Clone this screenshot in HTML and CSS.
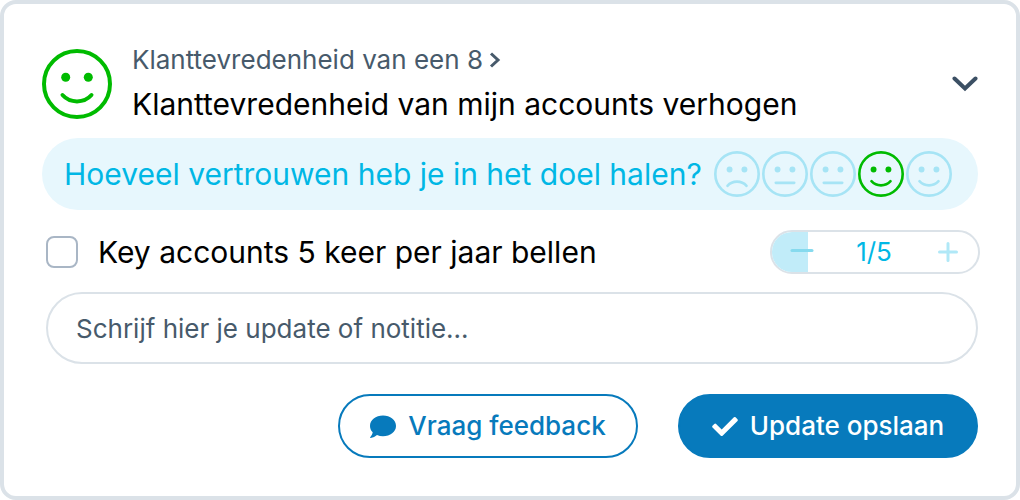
FILE: index.html
```html
<!DOCTYPE html>
<html lang="nl">
<head>
<meta charset="utf-8">
<meta name="viewport" content="width=device-width, initial-scale=1">
<title>Update</title>
<link rel="stylesheet" href="styles.css">
</head>
<body>
<svg class="sprite" aria-hidden="true">
  <symbol id="happy" viewBox="0 0 70 70">
    <circle cx="35" cy="35" r="33" class="line"/>
    <circle cx="23.7" cy="28.2" r="4.5" class="dot"/><circle cx="46.3" cy="28.2" r="4.5" class="dot"/>
    <path d="M20.5 46C28 54.5 42 54.5 49.5 46" class="line"/>
  </symbol>
  <symbol id="neutral" viewBox="0 0 70 70">
    <circle cx="35" cy="35" r="33" class="line"/>
    <circle cx="23.7" cy="28.2" r="4.5" class="dot"/><circle cx="46.3" cy="28.2" r="4.5" class="dot"/>
    <path d="M21 48.5H49" class="line"/>
  </symbol>
  <symbol id="sad" viewBox="0 0 70 70">
    <circle cx="35" cy="35" r="33" class="line"/>
    <circle cx="23.7" cy="28.2" r="4.5" class="dot"/><circle cx="46.3" cy="28.2" r="4.5" class="dot"/>
    <path d="M20.5 53C28 44.5 42 44.5 49.5 53" class="line"/>
  </symbol>
</svg>
<main class="card">
  <header class="header">
    <svg class="face face-large"><use href="#happy"/></svg>
    <div class="heading">
      <a class="parent" href="#">Klanttevredenheid van een 8<svg class="parent-arrow" viewBox="0 0 12 18"><path d="M2 2.5L9 9L2 15.5"/></svg></a>
      <h1 class="title">Klanttevredenheid van mijn accounts verhogen</h1>
    </div>
    <button class="toggle" type="button" aria-label="Inklappen"><svg class="toggle-icon" viewBox="0 0 26 16"><path d="M2.5 2.5L13 12.5L23.5 2.5"/></svg></button>
  </header>
  <section class="trust">
    <p class="question">Hoeveel vertrouwen heb je in het doel halen?</p>
    <div class="rating">
      <button class="rate" type="button" aria-label="Zeer weinig"><svg class="face"><use href="#sad"/></svg></button>
      <button class="rate" type="button" aria-label="Weinig"><svg class="face"><use href="#neutral"/></svg></button>
      <button class="rate" type="button" aria-label="Neutraal"><svg class="face"><use href="#neutral"/></svg></button>
      <button class="rate selected" type="button" aria-label="Veel" aria-pressed="true"><svg class="face"><use href="#happy"/></svg></button>
      <button class="rate" type="button" aria-label="Zeer veel"><svg class="face"><use href="#happy"/></svg></button>
    </div>
  </section>
  <div class="form">
    <div class="task">
      <label class="task-label"><input class="check" type="checkbox">Key accounts 5 keer per jaar bellen</label>
      <div class="stepper">
        <button class="step minus" type="button" aria-label="Minder"><svg class="step-icon" viewBox="0 0 20 20"><path d="M0 8.5H20"/></svg></button>
        <output class="count">1/5</output>
        <button class="step plus" type="button" aria-label="Meer"><svg class="step-icon" viewBox="0 0 20 20"><path d="M1.5 10H18.5M10 1.5V18.5"/></svg></button>
      </div>
    </div>
    <input class="note" type="text" aria-label="Update of notitie" placeholder="Schrijf hier je update of notitie...">
    <div class="actions">
      <button class="button" type="button"><svg class="button-icon" viewBox="0 0 26 26"><path d="M13 2.5C20.2 2.5 26 7.100 26 13S20.200 23.300 13 23.300C10.800 23.300 8.800 22.900 7 22.100C5.200 23.700 3 24.900 0.700 24.900C0.100 24.900 0 24.300 0.400 23.900C1.700 22.500 2.400 21 2.700 19.300C1 17.600 0 15.400 0 13C0 7.100 5.800 2.500 13 2.500Z"/></svg>Vraag feedback</button>
      <button class="button primary" type="button"><svg class="button-icon" viewBox="0 0 26 26"><path d="M8.800 22.700L0.500 14.400Q-0.200 13.500 0.500 12.700L2.300 10.900Q3.200 10.200 4.100 10.900L9.700 16.500L21.900 4.300Q22.800 3.600 23.600 4.300L25.500 6.200Q26.200 7 25.500 7.900L10.600 22.700Q9.700 23.400 8.800 22.700Z"/></svg>Update opslaan</button>
    </div>
  </div>
</main>
</body>
</html>
```
FILE: styles.css
```css
* { box-sizing: border-box; }

body {
  margin: 0;
  background: #fff;
  color: #000;
  font-family: Inter, "Liberation Sans", sans-serif;
  font-size: 26px;
  line-height: 32px;
}

button, input { font: inherit; }

button {
  padding: 0;
  border: 0;
  background: none;
  color: inherit;
  cursor: pointer;
}

svg { display: block; }

.sprite { position: absolute; width: 0; height: 0; }

.card {
  min-height: 100vh;
  padding: 40px 38px 36px;
  border: 4px solid #dbe2e8;
  border-radius: 16px;
}

.header {
  display: flex;
  align-items: center;
  gap: 20px;
  padding-bottom: 14px;
}

.face { width: 46px; height: 46px; }
.face-large { flex: none; width: 70px; height: 70px; color: #0b0; }
.line { fill: none; stroke: currentColor; stroke-width: 4; stroke-linecap: round; }
.dot { fill: currentColor; }

.heading { flex: 1; }

.parent {
  display: flex;
  align-items: center;
  gap: 6px;
  color: #475a6b;
  text-decoration: none;
}

.parent-arrow { width: 12px; height: 18px; fill: none; stroke: #475a6b; stroke-width: 3; }

.title {
  margin: 8px 0 0;
  font-size: 30px;
  font-weight: 400;
  line-height: 40px;
}

.toggle-icon { width: 26px; height: 16px; fill: none; stroke: #3c5064; stroke-width: 4; stroke-linecap: round; }

.trust {
  display: flex;
  align-items: center;
  justify-content: space-between;
  min-height: 72px;
  padding: 0 26px 0 22px;
  border-radius: 36px;
  background: #e7f7fd;
}

.question { margin: 0; color: #00b7e5; font-size: 30px; line-height: 40px; }

.rating { display: flex; gap: 2px; color: #a6e4f5; }
.selected { color: #0b0; }

.form { padding: 20px 0 0 4px; }

.task { display: flex; align-items: center; justify-content: space-between; margin-right: -2px; }

.task-label { display: flex; align-items: center; gap: 20px; font-size: 30px; line-height: 40px; }

.check {
  appearance: none;
  width: 32px;
  height: 32px;
  margin: 0;
  border: 2px solid #a9b6c5;
  border-radius: 8px;
}

.stepper {
  display: flex;
  width: 210px;
  height: 44px;
  overflow: hidden;
  border: 2px solid #dbe2e8;
  border-radius: 22px;
  color: #00b7e5;
}

.step { display: flex; align-items: center; width: 36px; }
.minus { justify-content: flex-end; background: #c1ecf9; }
.minus .step-icon { margin-right: -4px; stroke: #86daee; }
.plus { width: 60px; justify-content: center; }
.step-icon { flex: none; width: 20px; height: 20px; stroke: #b0e8f7; stroke-width: 3; stroke-linecap: round; overflow: visible; }
.count { flex: 1; line-height: 40px; text-align: center; padding-left: 22px; }

.note {
  display: block;
  width: 100%;
  height: 72px;
  margin-top: 18px;
  padding: 0 28px;
  border: 2px solid #dbe2e8;
  border-radius: 36px;
  background: #fff;
  color: #475a6b;
}

.note::placeholder { color: #475a6b; opacity: 1; }

.actions { display: flex; justify-content: flex-end; gap: 40px; margin-top: 30px; }

.button {
  display: flex;
  align-items: center;
  justify-content: center;
  gap: 12px;
  width: 300px;
  height: 64px;
  border: 2px solid #077abc;
  border-radius: 32px;
  color: #077abc;
  font-weight: 500;
}

.button-icon { width: 26px; height: 26px; fill: currentColor; }
.primary { background: #077abc; color: #fff; }
```
